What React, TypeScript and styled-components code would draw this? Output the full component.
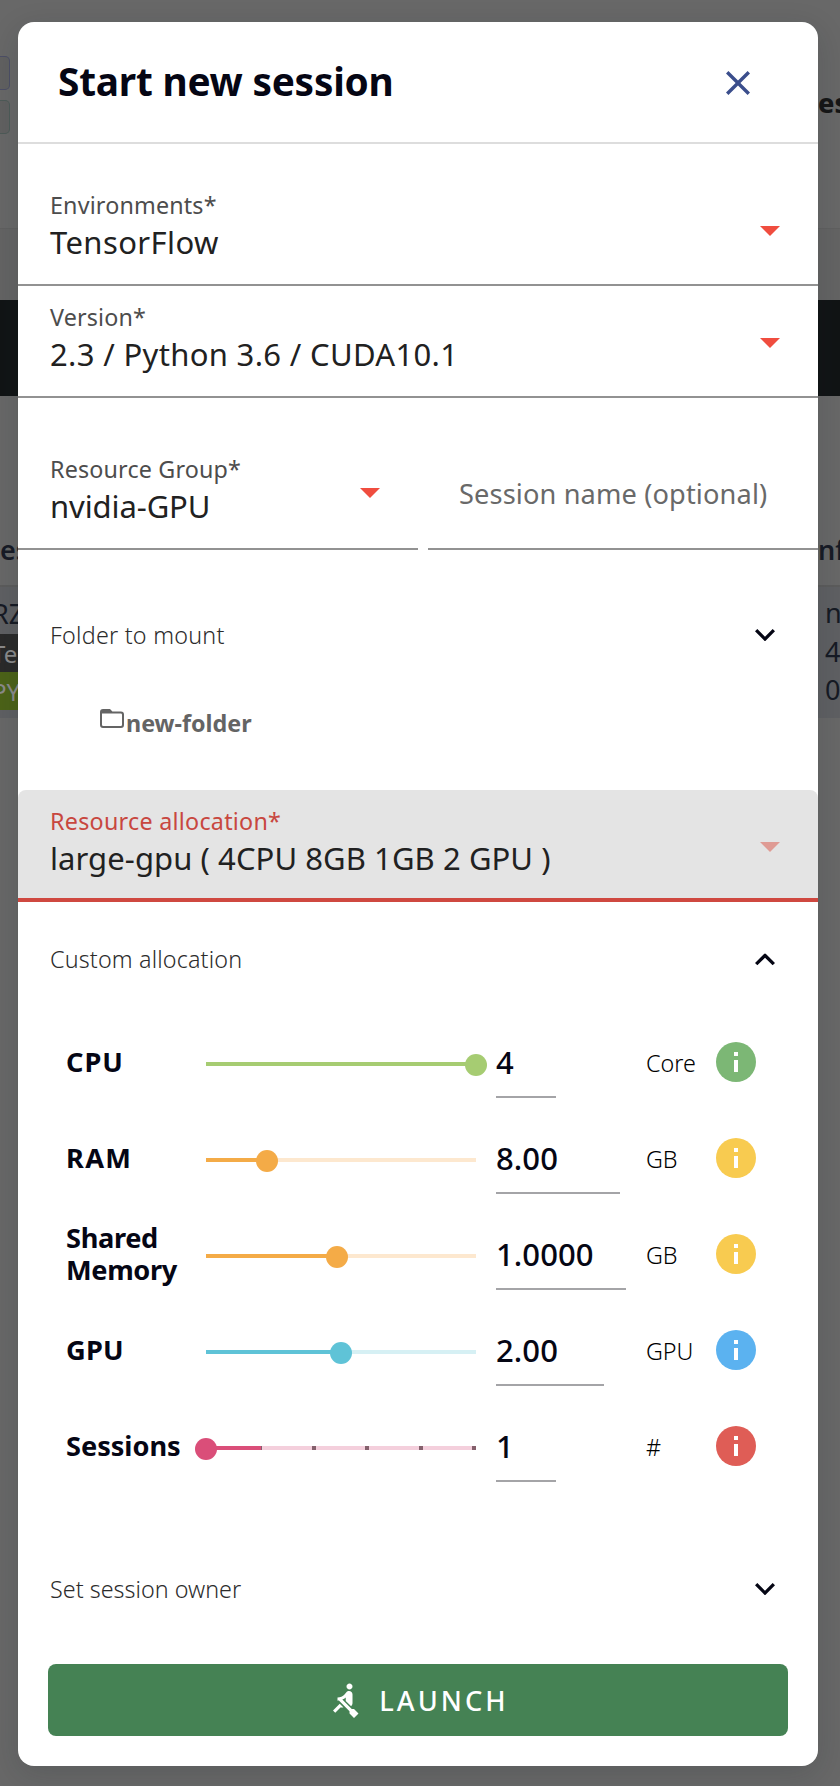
import React from 'react';
import styled, { createGlobalStyle, css } from 'styled-components';

const GlobalStyle = createGlobalStyle`
  * { box-sizing: border-box; }
  body {
    margin: 0;
    font-family: "Noto Sans", "Open Sans", sans-serif;
    background: #666666;
    color: #050614;
  }
`;

/* ---------- dimmed page behind the dialog ---------- */

const Screen = styled.div`
  position: relative;
  width: 840px;
  height: 1786px;
  overflow: hidden;
`;

const Page = styled.div`
  display: flex;
  flex-direction: column;
  height: 100%;
  background: #686868;
`;

const TopSection = styled.div`
  display: flex;
  justify-content: space-between;
  height: 229px;
  padding-top: 56px;
  border-bottom: 1px solid #606060;
`;

const Tags = styled.div`
  display: flex;
  flex-direction: column;
  gap: 10px;
`;

const Tag = styled.span<{ $edge: string }>`
  width: 10px;
  height: 34px;
  border: 1px solid ${(p) => p.$edge};
  border-left: 0;
  border-radius: 0 5px 5px 0;
  background: #616161;
`;

const TopName = styled.span`
  width: 22px;
  margin-top: 27px;
  font-size: 27px;
  font-weight: 800;
  line-height: 40px;
  color: #161616;
`;

const SubBar = styled.div`
  height: 71px;
  background: #646464;
`;

const DarkBar = styled.div`
  height: 96px;
  background: #111415;
`;

const TableHead = styled.div`
  display: flex;
  justify-content: space-between;
  align-items: flex-end;
  height: 191px;
  padding-bottom: 15px;
  border-bottom: 2px solid #5c5c5c;
  font-size: 27px;
  font-weight: 600;
  line-height: 40px;
  color: #171b26;
`;

const TableRow = styled.div`
  display: flex;
  justify-content: space-between;
  height: 131px;
  padding-top: 7px;
  background: #5f6063;
  font-size: 27px;
  color: #161a24;
`;

const Edge = styled.div`
  width: 22px;
`;

const SideCell = styled.div`
  display: flex;
  flex-direction: column;
  width: 18px;
  white-space: nowrap;
`;

const RowName = styled.span`
  height: 40px;
  margin-left: -8px;
  line-height: 40px;
`;

const Chip = styled.span<{ $bg: string }>`
  height: 38px;
  background: ${(p) => p.$bg};
  font-size: 24px;
  line-height: 39px;
  text-indent: -8px;
  color: #8b8b8b;
`;

const Numbers = styled.div`
  display: flex;
  flex-direction: column;
  width: 15px;
  line-height: 38.6px;
`;

/* ---------- dialog ---------- */

const Dialog = styled.div`
  position: absolute;
  top: 22px;
  left: 18px;
  display: flex;
  flex-direction: column;
  width: 800px;
  height: 1744px;
  border-radius: 16px;
  background: #ffffff;
  box-shadow: 0 8px 30px rgba(20, 28, 36, 0.16);
  overflow: hidden;
`;

const Header = styled.header`
  display: flex;
  flex: none;
  align-items: center;
  justify-content: space-between;
  height: 122px;
  padding: 0 68px 2px 40px;
  border-bottom: 2px solid #dddddd;
`;

const Title = styled.h1`
  margin: 0;
  font-size: 38.8px;
  font-weight: 700;
  line-height: 56px;
  letter-spacing: -0.22px;
`;

const CloseIcon = styled.svg`
  width: 24px;
  height: 24px;
  margin-top: 3px;
  fill: #3b4e8c;
`;

const Fields = styled.div`
  display: flex;
  flex-direction: column;
  margin-top: 30px;
`;

const FieldPair = styled.div`
  display: grid;
  grid-template-columns: 400px 390px;
  gap: 10px;
  margin-top: 40px;
`;

const Field = styled.div<{ $focused?: boolean }>`
  display: flex;
  flex: none;
  justify-content: space-between;
  height: 112px;
  padding: 15px 38px 0 32px;
  border-bottom: 2px solid #929292;
  ${(p) =>
    p.$focused &&
    css`
      margin-top: 15px;
      border-bottom: 4px solid #cf4840;
      border-radius: 8px 8px 0 0;
      background: #e4e4e4;
    `}
`;

const FieldText = styled.div`
  display: flex;
  flex-direction: column;
  white-space: nowrap;
`;

const FieldLabel = styled.span<{ $focused?: boolean; $tracking: number }>`
  font-size: 23.3px;
  line-height: 32px;
  letter-spacing: ${(p) => p.$tracking}px;
  color: ${(p) => (p.$focused ? '#c8473f' : '#4d4d4d')};
`;

const FieldValue = styled.span<{ $tracking: number }>`
  margin-top: 1px;
  font-size: 31px;
  line-height: 40px;
  letter-spacing: ${(p) => p.$tracking}px;
  color: #212121;
`;

const Arrow = styled.svg<{ $muted?: boolean; $top: number }>`
  flex: none;
  width: 20px;
  height: 10px;
  margin-top: ${(p) => p.$top}px;
  fill: ${(p) => (p.$muted ? '#df9b94' : '#f04d3f')};
`;

const Placeholder = styled.span`
  margin-left: -1px;
  padding-top: 21px;
  font-size: 27.2px;
  line-height: 40px;
  letter-spacing: 0.13px;
  white-space: nowrap;
  color: #696969;
`;

const SectionHead = styled.div<{ $gap: number }>`
  display: flex;
  flex: none;
  align-items: center;
  justify-content: space-between;
  height: 72px;
  margin-top: ${(p) => p.$gap}px;
  padding: 0 43px 0 32px;
`;

const SectionTitle = styled.span<{ $tracking: number }>`
  font-size: 23.3px;
  font-weight: 300;
  line-height: 32px;
  letter-spacing: ${(p) => p.$tracking}px;
  color: #2c2c2c;
`;

const ChevronIcon = styled.svg<{ $up?: boolean }>`
  width: 20px;
  height: 12.4px;
  fill: #050614;
  transform: ${(p) => (p.$up ? 'rotate(180deg)' : 'none')};
`;

const FolderRow = styled.div`
  display: flex;
  flex: none;
  align-items: center;
  height: 104px;
  padding-left: 82px;
  color: #646464;
`;

const FolderIcon = styled.svg`
  width: 24px;
  height: 20px;
  margin: 0 2px 9px 0;
  fill: #646464;
`;

const FolderName = styled.span`
  font-size: 23.3px;
  font-weight: 700;
  line-height: 32px;
`;

const Resources = styled.div`
  display: flex;
  flex: none;
  flex-direction: column;
  margin-top: 19px;
`;

const ResourceRow = styled.div`
  display: grid;
  grid-template-columns: 140px 270px 170px 70px 40px;
  align-items: center;
  height: 96px;
  padding-left: 48px;
`;

const ResourceName = styled.span<{ $tracking: number }>`
  width: 120px;
  font-size: 27.2px;
  font-weight: 700;
  line-height: 32px;
  letter-spacing: ${(p) => p.$tracking}px;
`;

const Slider = styled.div`
  position: relative;
  height: 22px;
  margin-top: 6px;
  padding-top: 8px;
`;

const Track = styled.div<{ $rest: string }>`
  display: flex;
  justify-content: space-between;
  height: 4px;
  background: ${(p) => p.$rest};
`;

const Filled = styled.div<{ $color: string; $ticks?: boolean }>`
  height: 4px;
  border-right: ${(p) => (p.$ticks ? '1px solid #84606c' : '0')};
  background: ${(p) => p.$color};
`;

const Tick = styled.span`
  width: 4px;
  height: 4px;
  background: #84606c;
`;

const Knob = styled.span<{ $color: string }>`
  position: absolute;
  top: 0;
  width: 22px;
  height: 22px;
  margin-left: -11px;
  border-radius: 50%;
  background: ${(p) => p.$color};
`;

const AmountBox = styled.div<{ $width: number }>`
  align-self: start;
  width: ${(p) => p.$width}px;
  height: 72px;
  margin: 12px 0 0 20px;
  padding-top: 2px;
  border-bottom: 2px solid #a4a4a7;
  font-size: 31px;
  font-weight: 500;
  line-height: 68px;
  letter-spacing: 0.08px;
`;

const Unit = styled.span`
  padding-top: 2px;
  font-size: 23.3px;
  font-weight: 300;
  line-height: 32px;
  color: #000000;
`;

const InfoIcon = styled.svg`
  width: 40px;
  height: 40px;
`;

const LaunchButton = styled.button`
  display: flex;
  flex: none;
  align-items: center;
  justify-content: center;
  gap: 16px;
  height: 72px;
  margin: 39px 30px 0;
  padding: 0;
  border: 0;
  border-radius: 8px;
  background: #458254;
  color: #ffffff;
  font-family: inherit;
  font-size: 27.2px;
  font-weight: 500;
  letter-spacing: 3.05px;
`;

const RowingIcon = styled.svg`
  width: 36px;
  height: 36px;
  fill: #ffffff;
`;

interface SelectProps {
  label: string;
  value: string;
  labelTracking?: number;
  valueTracking?: number;
  arrowTop?: number;
  focused?: boolean;
}

function Select({ label, value, labelTracking = 0.16, valueTracking = 0.2, arrowTop = 37, focused }: SelectProps) {
  return (
    <Field $focused={focused}>
      <FieldText>
        <FieldLabel $focused={focused} $tracking={labelTracking}>{label}*</FieldLabel>
        <FieldValue $tracking={valueTracking}>{value}</FieldValue>
      </FieldText>
      <Arrow viewBox="0 0 20 10" $muted={focused} $top={arrowTop}>
        <path d="M0 0h20L10 10z" />
      </Arrow>
    </Field>
  );
}

function Section({ title, gap, tracking, open }: { title: string; gap: number; tracking: number; open?: boolean }) {
  return (
    <SectionHead $gap={gap}>
      <SectionTitle $tracking={tracking}>{title}</SectionTitle>
      <ChevronIcon viewBox="6 8.59 12 7.41" $up={open}>
        <path d="M7.41 8.59 12 13.17l4.59-4.58L18 10l-6 6-6-6z" />
      </ChevronIcon>
    </SectionHead>
  );
}

interface Resource {
  name: string;
  amount: string;
  unit: string;
  color: string;
  rest: string;
  info: string;
  position: number;
  filled: number;
  width: number;
  tracking: number;
  ticks?: boolean;
}

const resources: Resource[] = [
  { name: 'CPU', amount: '4', unit: 'Core', color: '#a6cc72', rest: '#e4f0d4', info: '#7cb775', position: 270, filled: 270, width: 60, tracking: 1 },
  { name: 'RAM', amount: '8.00', unit: 'GB', color: '#f4ab47', rest: '#fde8cf', info: '#f8cb50', position: 61, filled: 61, width: 124, tracking: 1.3 },
  { name: 'Shared Memory', amount: '1.0000', unit: 'GB', color: '#f4ab47', rest: '#fde8cf', info: '#f8cb50', position: 130.5, filled: 130.5, width: 130, tracking: -0.35 },
  { name: 'GPU', amount: '2.00', unit: 'GPU', color: '#5fc3d7', rest: '#d6f0f4', info: '#5bb2f0', position: 135, filled: 135, width: 108, tracking: 0.2 },
  { name: 'Sessions', amount: '1', unit: '#', color: '#da4e79', rest: '#f4cfdc', info: '#df5d56', position: 0, filled: 56, width: 60, tracking: -0.04, ticks: true },
];

function ResourceLine({ r }: { r: Resource }) {
  return (
    <ResourceRow>
      <ResourceName $tracking={r.tracking}>{r.name}</ResourceName>
      <Slider>
        <Track $rest={r.rest}>
          <Filled $color={r.color} $ticks={r.ticks} style={{ width: r.filled }} />
          {r.ticks && (
            <>
              <Tick />
              <Tick />
              <Tick />
              <Tick />
            </>
          )}
        </Track>
        <Knob $color={r.color} style={{ left: r.position }} />
      </Slider>
      <AmountBox $width={r.width}>{r.amount}</AmountBox>
      <Unit>{r.unit}</Unit>
      <InfoIcon viewBox="2 2 20 20">
        <circle cx="12" cy="12" r="10" fill={r.info} />
        <path d="M11 7h2v2h-2zM11 11h2v6h-2z" fill="#ffffff" />
      </InfoIcon>
    </ResourceRow>
  );
}

function Backdrop() {
  return (
    <Page>
      <TopSection>
        <Tags>
          <Tag $edge="#4d4f66" />
          <Tag $edge="#4e5b58" />
        </Tags>
        <TopName>es</TopName>
      </TopSection>
      <SubBar />
      <DarkBar />
      <TableHead>
        <Edge>es</Edge>
        <Edge>nf</Edge>
      </TableHead>
      <TableRow>
        <SideCell>
          <RowName>RZ</RowName>
          <Chip $bg="#2a2a2a">Te</Chip>
          <Chip $bg="#4c6318">PY</Chip>
        </SideCell>
        <Numbers>
          <span>n</span>
          <span>4</span>
          <span>0</span>
        </Numbers>
      </TableRow>
    </Page>
  );
}

export default function App() {
  return (
    <Screen>
      <GlobalStyle />
      <Backdrop />
      <Dialog role="dialog">
        <Header>
          <Title>Start new session</Title>
          <CloseIcon viewBox="5 5 14 14">
            <path d="M19 6.41 17.59 5 12 10.59 6.41 5 5 6.41 10.59 12 5 17.59 6.41 19 12 13.41 17.59 19 19 17.59 13.41 12z" />
          </CloseIcon>
        </Header>
        <Fields>
          <Select label="Environments" value="TensorFlow" valueTracking={0.4} />
          <Select label="Version" value="2.3 / Python 3.6 / CUDA10.1" labelTracking={0.15} valueTracking={0.33} />
          <FieldPair>
            <Select label="Resource Group" value="nvidia-GPU" valueTracking={-0.1} arrowTop={35} />
            <Field>
              <Placeholder>Session name (optional)</Placeholder>
            </Field>
          </FieldPair>
        </Fields>
        <Section title="Folder to mount" gap={49} tracking={0.24} />
        <FolderRow>
          <FolderIcon viewBox="0 0 24 20">
            <path d="M3 0h7l2.4 2.4H21a3 3 0 0 1 3 3V16a3 3 0 0 1-3 3H3a3 3 0 0 1-3-3V3a3 3 0 0 1 3-3zM2 4.6V15.8a1.2 1.2 0 0 0 1.2 1.2h17.6a1.2 1.2 0 0 0 1.2-1.2V5.8a1.2 1.2 0 0 0-1.2-1.2z" fillRule="evenodd" />
          </FolderIcon>
          <FolderName>new-folder</FolderName>
        </FolderRow>
        <Select label="Resource allocation" value="large-gpu ( 4CPU 8GB 1GB 2 GPU )" labelTracking={0.26} valueTracking={0.08} focused />
        <Section title="Custom allocation" gap={21} tracking={0.16} open />
        <Resources>
          {resources.map((r) => (
            <ResourceLine key={r.name} r={r} />
          ))}
        </Resources>
        <Section title="Set session owner" gap={59} tracking={0.03} />
        <LaunchButton>
          <RowingIcon viewBox="0 0 24 24">
            <path d="M8.5 14.5 4 19l1.5 1.5L9 17h2l-2.5-2.5zM15 1c-1.1 0-2 .9-2 2s.9 2 2 2 2-.9 2-2-.9-2-2-2zm6 20.01L18 24l-2.99-3.01V19.5l-7.1-7.09c-.31.05-.61.07-.91.07v-2.16c1.66.03 3.61-.87 4.67-2.04l1.4-1.55c.19-.21.43-.38.69-.5.29-.14.62-.23.96-.23h.03C15.99 6.01 17 7.02 17 8.26v5.75c0 .84-.35 1.61-.92 2.16l-3.58-3.58v-2.27c-.63.52-1.43 1.02-2.29 1.39L16.5 18H18l3 3.01z" />
          </RowingIcon>
          LAUNCH
        </LaunchButton>
      </Dialog>
    </Screen>
  );
}
